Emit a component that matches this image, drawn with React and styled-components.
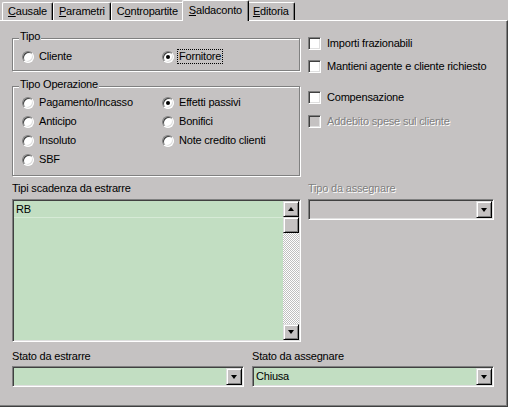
import React from 'react';
import styled, { createGlobalStyle } from 'styled-components';

const FACE = '#c5c2c2';
const FIELD = '#c2dec2';

const GlobalStyle = createGlobalStyle`
  html, body {
    margin: 0;
    padding: 0;
    background: ${FACE};
  }
  body {
    font-family: "Liberation Sans", Arial, sans-serif;
    font-size: 11px;
    letter-spacing: -0.2px;
    color: #000;
  }
`;

const Window = styled.div`
  width: 508px;
  height: 407px;
  background: ${FACE};
  display: flex;
  flex-direction: column;
  overflow: hidden;
`;

const TabStrip = styled.div`
  display: flex;
  align-items: flex-end;
  height: 20px;
  padding-left: 2px;
  position: relative;
  z-index: 1;
`;

const Tab = styled.div`
  box-sizing: border-box;
  height: ${p => (p.$active ? '21px' : '18px')};
  margin: ${p => (p.$active ? '0 -2px -1px' : '0')};
  padding: ${p => (p.$active ? '2px 6px 0' : '1px 5px 0')};
  line-height: 14px;
  background: ${FACE};
  border-left: 1px solid #fff;
  border-top: 1px solid #fff;
  border-right: 1px solid #000;
  box-shadow: inset -1px 0 0 #808080;
  border-top-left-radius: 2px;
  border-top-right-radius: 2px;
  position: relative;
  z-index: ${p => (p.$active ? 2 : 0)};
  white-space: nowrap;
`;

const Panel = styled.div`
  flex: 1;
  border-top: 1px solid #fff;
  border-right: 1px solid #404040;
  border-bottom: 1px solid #404040;
  box-shadow: inset -1px -1px 0 #808080;
  padding: 0 13px 0 12px;
`;

const TwoCols = styled.div`
  display: grid;
  grid-template-columns: 289px 1fr;
  column-gap: 7px;
  margin-top: ${p => p.$mt || 0}px;
`;

const Column = styled.div`
  display: flex;
  flex-direction: column;
`;

const Group = styled.div`
  position: relative;
  box-sizing: border-box;
  width: 288px;
  height: ${p => p.$h}px;
  margin-top: ${p => p.$mt}px;
  border: 1px solid #808080;
  box-shadow: 1px 1px 0 #fff, inset 1px 1px 0 #fff;
  padding-top: ${p => p.$pt}px;
`;

const Legend = styled.div`
  position: absolute;
  top: -9px;
  left: 6px;
  padding: 0 1px;
  line-height: 13px;
  background: ${FACE};
`;

const RadioGrid = styled.div`
  display: grid;
  grid-template-columns: 140px 1fr;
  row-gap: 4px;
  padding-left: 9px;
`;

const Option = styled.div`
  display: flex;
  align-items: center;
  height: 15px;
  gap: ${p => p.$gap || 3}px;
  margin-top: ${p => p.$mt || 0}px;
`;

const RadioDot = styled.span`
  position: relative;
  box-sizing: border-box;
  width: 12px;
  height: 12px;
  border-radius: 50%;
  background: #fff;
  border: 1px solid;
  border-color: #808080 #fff #fff #808080;
  box-shadow: inset 1px 1px 0 #404040, inset -1px -1px 0 #dfdfdf;
  flex: none;
  &::after {
    content: '';
    display: ${p => (p.$checked ? 'block' : 'none')};
    position: absolute;
    left: 3px;
    top: 3px;
    width: 4px;
    height: 4px;
    border-radius: 50%;
    background: #000;
  }
`;

const Caption = styled.span`
  line-height: 13px;
  padding: 0 1px;
  border: 1px dotted ${p => (p.$focus ? '#000' : 'transparent')};
  white-space: nowrap;
`;

const CheckText = styled.span`
  line-height: 13px;
  white-space: nowrap;
  color: ${p => (p.$disabled ? '#808080' : '#000')};
  text-shadow: ${p => (p.$disabled ? '1px 1px 0 #fff' : 'none')};
`;

const CheckBox = styled.span`
  box-sizing: border-box;
  width: 13px;
  height: 13px;
  flex: none;
  background: ${p => (p.$disabled ? FACE : '#fff')};
  border: 1px solid;
  border-color: #808080 #fff #fff #808080;
  box-shadow: inset 1px 1px 0 #404040, inset -1px -1px 0 #dfdfdf;
`;

const Label = styled.div`
  line-height: 13px;
  margin-bottom: ${p => p.$mb || 4}px;
  white-space: nowrap;
  color: ${p => (p.$disabled ? '#808080' : '#000')};
  text-shadow: ${p => (p.$disabled ? '1px 1px 0 #fff' : 'none')};
`;

const Sunken = styled.div`
  box-sizing: border-box;
  height: ${p => p.$h}px;
  display: flex;
  background: ${p => (p.$disabled ? FACE : FIELD)};
  border: 1px solid;
  border-color: #808080 #fff #fff #808080;
  box-shadow: inset 1px 1px 0 #404040, inset -1px -1px 0 #dfdfdf;
  padding: 1px;
`;

const Items = styled.div`
  flex: 1;
  display: flex;
  flex-direction: column;
`;

const Item = styled.div`
  height: 16px;
  line-height: 16px;
  padding-left: 2px;
  border-bottom: 1px solid #d6ead6;
`;

const ScrollBar = styled.div`
  width: 16px;
  display: flex;
  flex-direction: column;
`;

const Track = styled.div`
  flex: 1;
  background: repeating-conic-gradient(#ffffff 0 25%, #c0c0c0 0 50%) 0 0 / 2px 2px;
`;

const Raised = styled.div`
  box-sizing: border-box;
  width: 16px;
  height: ${p => p.$h || 16}px;
  flex: none;
  display: flex;
  align-items: center;
  justify-content: center;
  background: ${FACE};
  border: 1px solid;
  border-color: #dfdfdf #000 #000 #dfdfdf;
  box-shadow: inset 1px 1px 0 #fff, inset -1px -1px 0 #808080;
`;

const Arrow = styled.span`
  width: 0;
  height: 0;
  border-left: 3.5px solid transparent;
  border-right: 3.5px solid transparent;
  ${p => (p.$up ? 'border-bottom: 4px solid #000;' : 'border-top: 4px solid #000;')}
`;

const ComboText = styled.div`
  flex: 1;
  line-height: 17px;
  padding-left: 2px;
`;

const BottomRow = styled.div`
  display: grid;
  grid-template-columns: 232px 1fr;
  column-gap: 8px;
  margin-top: 8px;
`;

const Radio = ({ label, checked, focus }) => (
  <Option>
    <RadioDot $checked={checked} />
    <Caption $focus={focus}>{label}</Caption>
  </Option>
);

const Check = ({ label, disabled, mt }) => (
  <Option $gap={6} $mt={mt}>
    <CheckBox $disabled={disabled} />
    <CheckText $disabled={disabled}>{label}</CheckText>
  </Option>
);

const Combo = ({ value, disabled }) => (
  <Sunken $h={21} $disabled={disabled}>
    <ComboText>{value}</ComboText>
    <Raised $h={17}><Arrow /></Raised>
  </Sunken>
);

const App = () => (
  <Window>
    <GlobalStyle />
    <TabStrip>
      <Tab><u>C</u>ausale</Tab>
      <Tab><u>P</u>arametri</Tab>
      <Tab>C<u>o</u>ntropartite</Tab>
      <Tab $active><u>S</u>aldaconto</Tab>
      <Tab><u>E</u>ditoria</Tab>
    </TabStrip>
    <Panel>
      <TwoCols>
        <Column>
          <Group $h={33} $mt={17} $pt={10}>
            <Legend>Tipo</Legend>
            <RadioGrid>
              <Radio label="Cliente" />
              <Radio label="Fornitore" checked focus />
            </RadioGrid>
          </Group>
          <Group $h={90} $mt={15} $pt={8}>
            <Legend>Tipo Operazione</Legend>
            <RadioGrid>
              <Radio label="Pagamento/Incasso" />
              <Radio label="Effetti passivi" checked />
              <Radio label="Anticipo" />
              <Radio label="Bonifici" />
              <Radio label="Insoluto" />
              <Radio label="Note credito clienti" />
              <Radio label="SBF" />
            </RadioGrid>
          </Group>
        </Column>
        <Column>
          <Check label="Importi frazionabili" mt={15} />
          <Check label="Mantieni agente e cliente richiesto" mt={8} />
          <Check label="Compensazione" mt={16} />
          <Check label="Addebito spese sul cliente" disabled mt={9} />
        </Column>
      </TwoCols>

      <TwoCols $mt={6}>
        <Column>
          <Label>Tipi scadenza da estrarre</Label>
          <Sunken $h={143}>
            <Items>
              <Item>RB</Item>
            </Items>
            <ScrollBar>
              <Raised><Arrow $up /></Raised>
              <Raised />
              <Track />
              <Raised><Arrow /></Raised>
            </ScrollBar>
          </Sunken>
        </Column>
        <Column>
          <Label $disabled>Tipo da assegnare</Label>
          <Combo disabled />
        </Column>
      </TwoCols>

      <BottomRow>
        <Column>
          <Label $mb={3}>Stato da estrarre</Label>
          <Combo />
        </Column>
        <Column>
          <Label $mb={3}>Stato da assegnare</Label>
          <Combo value="Chiusa" />
        </Column>
      </BottomRow>
    </Panel>
  </Window>
);

export default App;
